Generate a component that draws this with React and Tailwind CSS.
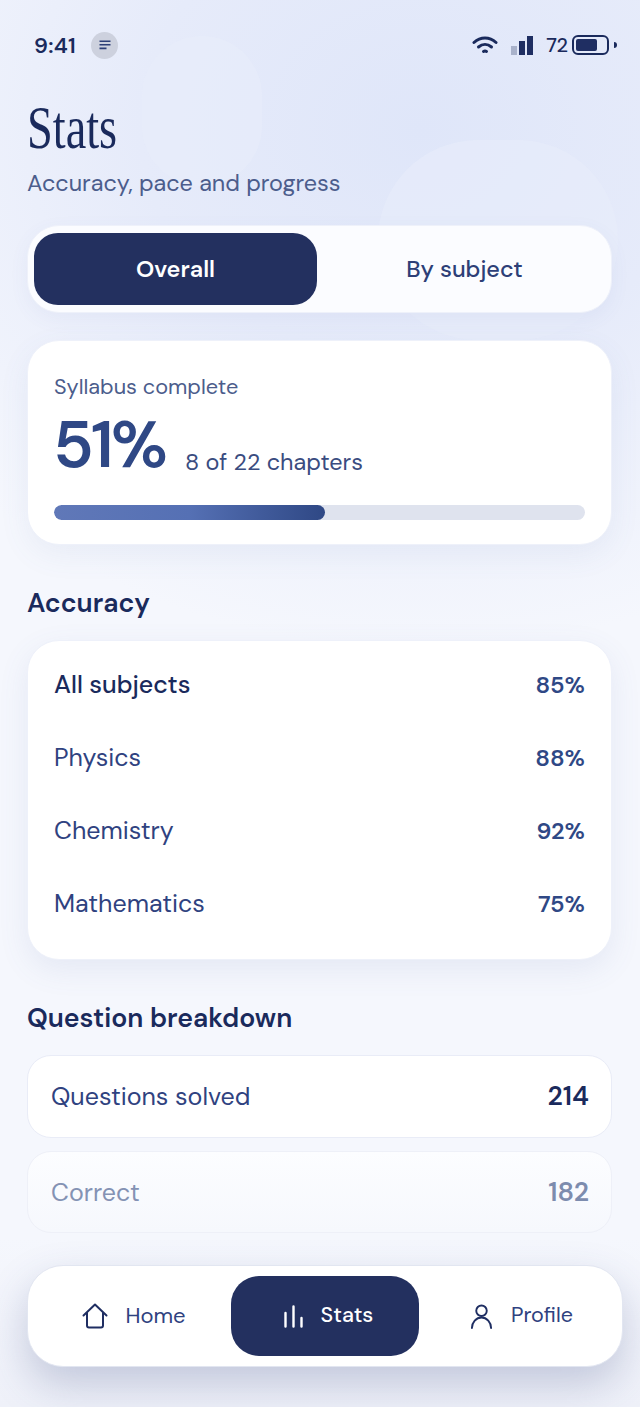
const accuracy = [
  { name: 'All subjects', value: '85%', strong: true },
  { name: 'Physics', value: '88%' },
  { name: 'Chemistry', value: '92%' },
  { name: 'Mathematics', value: '75%' },
];

const HomeIcon = ({ className }) => (
  <svg viewBox="0 0 26 26" className={className} fill="none" stroke="currentColor" strokeWidth="2" strokeLinecap="round" strokeLinejoin="round">
    <path d="M1.5 12.5L13 1.5l11.5 11" />
    <path d="M5 10v12.5a2 2 0 0 0 2 2h12a2 2 0 0 0 2-2V10" />
  </svg>
);

const StatsIcon = ({ className }) => (
  <svg viewBox="0 0 19 23" className={className} fill="none" stroke="currentColor" strokeWidth="2.4" strokeLinecap="round">
    <path d="M1.5 8v13.5M9.5 1.5v20M17.5 13v8.5" />
  </svg>
);

const UserIcon = ({ className }) => (
  <svg viewBox="0 0 24 26" className={className} fill="none" stroke="currentColor" strokeWidth="2" strokeLinecap="round">
    <circle cx="12" cy="7" r="5.5" />
    <path d="M2 25c0-6 4.5-11 10-11s10 5 10 11" />
  </svg>
);

const StatusBar = () => (
  <div className="flex h-[90px] items-center justify-between pl-[34px] pr-[23px] text-[#1a2a5c]">
    <div className="flex items-center gap-[15px]">
      <span className="text-[22px] font-semibold tracking-[0.3px]">9:41</span>
      <span className="flex h-[27px] w-[27px] items-center justify-center rounded-full bg-[#cdd1de]">
        <svg viewBox="0 0 12 10" className="h-[10px] w-[12px]" fill="none" stroke="#2d3f77" strokeWidth="1.6">
          <path d="M0.5 1.2h11M0.5 4.8h11M0.5 8.4h7" />
        </svg>
      </span>
    </div>
    <div className="flex items-center">
      <svg viewBox="0 0 26 20" className="h-[20px] w-[26px]" fill="none" stroke="#1a2a5c" strokeWidth="3" strokeLinecap="round">
        <path d="M2 7.5C8.5 1.5 17.5 1.5 24 7.5" />
        <path d="M6.5 12C10.5 8.6 15.5 8.6 19.5 12" />
        <path d="M11.5 16.5C12.5 15.8 13.5 15.8 14.5 16.5" />
      </svg>
      <div className="ml-[13px] flex h-[20px] items-end gap-[2px]">
        <span className="h-[9px] w-[6px] bg-[#a9b2cb]" />
        <span className="h-[14px] w-[6px] bg-[#1f2e62]" />
        <span className="h-[19px] w-[6px] bg-[#1f2e62]" />
      </div>
      <span className="ml-[13px] text-[20px] font-medium">72</span>
      <span className="ml-[4px] flex h-[20px] w-[37px] items-center rounded-[6px] border-2 border-[#1a2a5c] p-[2px]">
        <span className="h-full w-[21px] rounded-[2px] bg-[#1f2e62]" />
      </span>
      <span className="ml-[5px] h-[6px] w-[3px] rounded-r-full bg-[#1a2a5c]" />
    </div>
  </div>
);

const App = () => {
  return (
    <div className="relative h-[1407px] w-[640px] overflow-hidden bg-[#f5f7fd] font-['DM_Sans','Inter','Noto_Sans',sans-serif] text-[#1a2a5c]">
      {/* soft background tint and blobs */}
      <div className="absolute inset-0 bg-[radial-gradient(ellipse_620px_520px_at_420px_130px,#dfe6f9_0%,#e6ebfa_45%,#f5f7fd_100%)]" />
      <div className="absolute left-[142px] top-[36px] h-[150px] w-[120px] rounded-[60px] bg-[#e8edfa]/60" />
      <div className="absolute left-[378px] top-[140px] h-[200px] w-[240px] rounded-[120px] bg-[#e8edfa]/60" />

      <div className="relative">
        <StatusBar />

        <div className="pl-[27px] pr-[28px]">
          <h1 className="origin-left scale-x-[0.76] font-['Liberation_Serif',serif] text-[61px] leading-[76px] text-[#1a2a5c]">Stats</h1>
          <p className="mt-[2px] text-[23.4px] leading-[30px] text-[#4c5d8c]">Accuracy, pace and progress</p>

          <div className="mt-[27px] flex h-[88px] items-center rounded-[32px] border border-[#eef1fa] bg-[#fbfcff] p-[6px] shadow-[0_6px_20px_rgba(90,110,170,0.06)]">
            <div className="flex h-[72px] w-[283px] items-center justify-center rounded-[24px] bg-[#23305f] pt-[2px] text-[23.4px] font-semibold text-white">Overall</div>
            <div className="flex h-[72px] flex-1 items-center justify-center pl-[7px] pt-[2px] text-[23.4px] font-medium text-[#2d3f77]">By subject</div>
          </div>

          <div className="mt-[27px] h-[205px] rounded-[32px] border border-[#eef1fa] bg-white px-[26px] pt-[32px] shadow-[0_10px_30px_rgba(90,110,170,0.08)]">
            <p className="text-[21.7px] leading-[28px] text-[#4c5d8c]">Syllabus complete</p>
            <div className="mt-[4px] -ml-[1px] flex items-end gap-[20px]">
              <span className="text-[66px] font-semibold leading-[80px] tracking-[-3px] text-[#2f4885]">51%</span>
              <span className="pb-[8px] text-[23.4px] leading-[30px] text-[#3a4c80]">8 of 22 chapters</span>
            </div>
            <div className="mt-[20px] h-[15px] overflow-hidden rounded-full bg-[#dfe3ee]">
              <div className="h-full w-[51%] rounded-full bg-gradient-to-r from-[#6078b8] via-[#5570b4] to-[#2f4885]" />
            </div>
          </div>

          <h2 className="mt-[41px] text-[26.6px] font-semibold leading-[34px] text-[#1a2a5c]">Accuracy</h2>

          <div className="mt-[20px] h-[320px] rounded-[32px] border border-[#eef1fa] bg-white px-[26px] py-[7px] shadow-[0_10px_30px_rgba(90,110,170,0.1)]">
            {accuracy.map((row) => (
              <div key={row.name} className="flex h-[73px] items-center justify-between">
                <span className={row.strong ? 'text-[25px] font-medium text-[#1a2a5c]' : 'text-[25px] text-[#2f4280]'}>{row.name}</span>
                <span className="pt-[2px] text-[23.5px] font-semibold text-[#2f4885]">{row.value}</span>
              </div>
            ))}
          </div>

          <h2 className="mt-[41px] text-[26.6px] font-semibold leading-[34px] text-[#1a2a5c]">Question breakdown</h2>

          <div className="mt-[20px] flex h-[83px] items-center justify-between rounded-[24px] border border-[#e9ecf7] bg-white pl-[23px] pr-[22px] pt-[1px]">
            <span className="text-[25px] text-[#2f4280]">Questions solved</span>
            <span className="text-[26.5px] font-semibold text-[#1a2a5c]">214</span>
          </div>
          <div className="mt-[13px] flex h-[82px] items-center justify-between rounded-[24px] border border-[#eef0f8] bg-gradient-to-b from-[#fcfdff] to-[#f6f8fd] pl-[23px] pr-[22px] pt-[2px]">
            <span className="text-[25px] text-[#8492b4]">Correct</span>
            <span className="text-[26.5px] font-semibold text-[#7d8cae]">182</span>
          </div>
        </div>
      </div>

      {/* bottom nav floats over the list */}
      <div className="absolute bottom-0 left-0 right-0 h-[170px] bg-gradient-to-b from-[#f5f7fd00] to-[#eff1f9]" />
      <div className="absolute left-[27px] top-[1265px] flex h-[102px] w-[596px] items-center rounded-[36px] border border-[#e2e6f1] bg-white pl-[10px] shadow-[0_18px_40px_rgba(60,75,130,0.25)]">
        <div className="flex w-[193px] items-center justify-center gap-[17px] pr-[1px] text-[#2f4280]">
          <HomeIcon className="h-[26px] w-[26px] text-[#1f2e62]" />
          <span className="pb-[2px] text-[22px]">Home</span>
        </div>
        <div className="flex h-[80px] w-[188px] items-center justify-center gap-[18px] rounded-[28px] bg-[#23305f] pl-[7px] text-white">
          <StatsIcon className="h-[23px] w-[19px]" />
          <span className="pb-[1px] text-[21.5px] font-medium">Stats</span>
        </div>
        <div className="flex flex-1 items-center justify-center gap-[18px] pl-[2px] text-[#2f4280]">
          <UserIcon className="h-[25px] w-[23px] text-[#1f2e62]" />
          <span className="pb-[1px] text-[21.5px]">Profile</span>
        </div>
      </div>
    </div>
  );
};

export default App;
